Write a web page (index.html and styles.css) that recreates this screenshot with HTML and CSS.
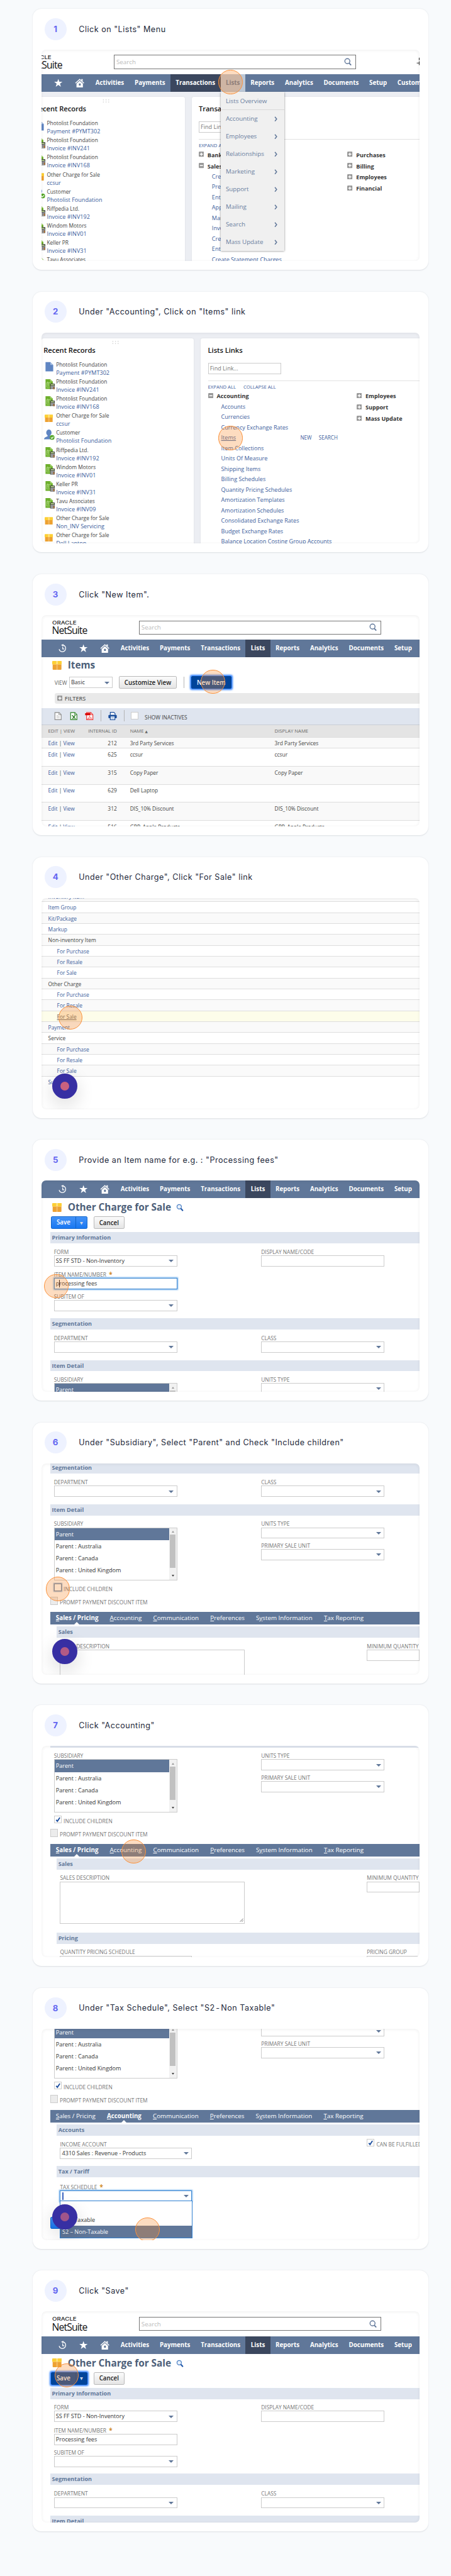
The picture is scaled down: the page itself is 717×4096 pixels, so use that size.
FILE: index.html
```
<!DOCTYPE html>
<html lang="en">
<head>
<meta charset="utf-8">
<title>NetSuite item guide</title>
<link rel="stylesheet" href="styles.css">
</head>
<body>
<svg class="sprite" width="0" height="0">
  <symbol id="i-history" viewBox="0 0 22 22"><path d="M9 2.6A8.4 8.4 0 1 1 2 13" fill="none" stroke="#fff" stroke-width="2"/><path d="M7 2.8l5.500-2.800v5.800z" fill="#fff"/><path d="M11 6.500v6h4" fill="none" stroke="#fff" stroke-width="2"/></symbol>
  <symbol id="i-star" viewBox="0 0 22 22"><path d="M11 .8l2.600 7.200h7.700l-6.100 4.700 2.300 7.700L11 15.800l-6.500 4.600 2.300-7.700L.7 8h7.700z" fill="#fff"/></symbol>
  <symbol id="i-home" viewBox="0 0 24 22"><path d="M1.500 11.500L12 2l10.500 9.500" fill="none" stroke="#fff" stroke-width="2.200"/><path d="M16 1h3.500v5.500L16 3.800z" fill="#fff"/><path d="M4 12.500L12 5.500l8 7V22H4z" fill="#fff"/><path d="M10 12h4.500v5.500H10z" fill="#607799"/></symbol>
  <symbol id="i-search" viewBox="0 0 18 18"><circle cx="7.500" cy="7.500" r="5.700" fill="none" stroke="#607799" stroke-width="2"/><path d="M11.500 11.800l4.500 4.700" stroke="#607799" stroke-width="2.600"/></symbol>
  <symbol id="i-find" viewBox="0 0 18 18"><circle cx="7" cy="6.800" r="5" fill="#eaf2fb" stroke="#4a7fc4" stroke-width="1.800"/><path d="M10.500 10.500l5 5.500" stroke="#1f56a8" stroke-width="3"/></symbol>
  <symbol id="i-box" viewBox="0 0 22 20"><path d="M0 1.500Q0 0 1.500 0h19Q22 0 22 1.500V8H0z" fill="#fdcf35"/><path d="M1 8h20v10.500q0 1.500-1.500 1.500h-17Q1 20 1 18.500z" fill="#eda131"/><path d="M9 0h4v8H9z" fill="#fee080"/><path d="M9 8h4v12H9z" fill="#f2b55c"/></symbol>
  <symbol id="i-page" viewBox="0 0 22 24"><path d="M.5 1h11l6.500 6.500V22H.5z" fill="#5f85c2"/><path d="M11.500 1L18 7.500h-6.500z" fill="#a9c0e2"/></symbol>
  <symbol id="i-invoice" viewBox="0 0 22 24"><path d="M.5 0h10.500l6 5.500V22H.5z" fill="#6cae2a"/><path d="M11 0l6 5.500h-6z" fill="#a5d36f"/><path d="M3 8h9v10H3zM5.500 5v10M8 8v8" fill="none" stroke="#bfe29a" stroke-width="1"/><rect x="11" y="10" width="10.500" height="14" rx="1" fill="#3c3c3c"/><path d="M12.500 11.500h7.500v2.500h-7.500z" fill="#b9d68e"/><path d="M12.500 15.500h2v2h-2zm3 0h2v2h-2zm3 0h2v2h-2zm-6 2.800h2v2h-2zm3 0h2v2h-2zm-3 2.700h2v2h-2zm3 0h2v2h-2z" fill="#eee"/><path d="M18.500 18.300h2v4.700h-2z" fill="#e0924a"/></symbol>
  <symbol id="i-user" viewBox="0 0 24 24"><ellipse cx="11" cy="7" rx="6" ry="7" fill="#5f85c2"/><path d="M8 11h6v4l6 3v4H0q0-4 8-6.500z" fill="#5f85c2"/><circle cx="18.500" cy="18" r="5.500" fill="#58a82c"/><path d="M15.800 18l2 2.200 3.700-4" fill="none" stroke="#fff" stroke-width="1.700"/></symbol>
  <symbol id="i-plus" viewBox="0 0 12 12"><rect width="12" height="12" rx="2" fill="#999"/><path d="M6 2.500v7M2.500 6h7" stroke="#fff" stroke-width="2"/></symbol>
  <symbol id="i-minus" viewBox="0 0 12 12"><rect width="12" height="12" rx="2" fill="#999"/><path d="M2.500 6h7" stroke="#fff" stroke-width="2"/></symbol>
  <symbol id="i-chev" viewBox="0 0 8 12"><path d="M1.500 1l4 5-4 5" fill="none" stroke="#607799" stroke-width="2.200"/></symbol>
  <symbol id="i-tick" viewBox="0 0 16 16"><path d="M3.500 8.500l3 3.500 6-9" fill="none" stroke="#1f50a0" stroke-width="2.800"/></symbol>
  <symbol id="i-doc" viewBox="0 0 18 20"><path d="M1.500 1.500h10l5 5v12h-15z" fill="#fff" stroke="#999" stroke-width="2"/><path d="M11 1.500v5.500h5.500" fill="none" stroke="#999" stroke-width="1.500"/><path d="M5 8.500h5M5 11.500h8M5 14h8" stroke="#bbb" stroke-width="1.200"/></symbol>
  <symbol id="i-xls" viewBox="0 0 18 20"><path d="M1.500 1.500h10l5 5v12h-15z" fill="#fff" stroke="#4a9444" stroke-width="2"/><path d="M11 1.500v5.500h5.500" fill="none" stroke="#4a9444" stroke-width="1.500"/><path d="M5 8l8 8.500M12.500 8L6 16.500" stroke="#2f7d2b" stroke-width="2.200"/></symbol>
  <symbol id="i-pdf" viewBox="0 0 20 20"><path d="M3.500 1.500h10l5 5v12h-15z" fill="#fff" stroke="#ee4a4a" stroke-width="2"/><path d="M13 1.500v5.500h5.500" fill="none" stroke="#ee4a4a" stroke-width="1.500"/><path d="M0 3h12.500v5H0z" fill="#d80000"/><path d="M10.500 9c0 3-2 6-4.500 7.500 3-1.500 6-2 10-1.500-3 0-5-3-5.500-6z" fill="none" stroke="#ee4a4a" stroke-width="1.200"/></symbol>
  <symbol id="i-print" viewBox="0 0 20 20"><path d="M4.500 1h8.500l3 3v4h-11.500z" fill="#fff" stroke="#1c4f9c" stroke-width="1.800"/><rect y="7" width="20" height="8" rx="2" fill="#1c4f9c"/><path d="M4.500 10h11v9h-11z" fill="#fff" stroke="#1c4f9c" stroke-width="1.800"/><path d="M6.500 12.500h7M6.500 14.500h7M6.500 16.500h7" stroke="#7c9fcf"/></symbol>
  <symbol id="i-grip" viewBox="0 0 16 8"><path d="M1 0h2v2H1zM7 0h2v2H7zM13 0h2v2h-2zM1 5h2v2H1zM7 5h2v2H7zM13 5h2v2h-2z" fill="#d4d4d4"/></symbol>
  <symbol id="i-scan" viewBox="0 0 20 24"><path d="M8 8V2h8M1 16h12M8 11v11" fill="none" stroke="#333" stroke-width="2"/></symbol>
</svg>
<main class="guide">

<section class="card">
  <header class="step"><span class="num">1</span><h2>Click on "Lists" Menu</h2></header>
  <div class="shot home">
    <div class="top shift"><div class="logo"><b>ORACLE</b><i>NetSuite</i></div><div class="search"><span>Search</span><svg><use href="#i-search"/></svg></div><svg class="scan"><use href="#i-scan"/></svg></div>
    <nav class="nav shift"><a class="ic"><svg><use href="#i-history"/></svg></a><a class="ic"><svg><use href="#i-star"/></svg></a><a class="ic"><svg><use href="#i-home"/></svg></a><a>Activities</a><a>Payments</a><a class="on">Transactions</a><a class="hover">Lists</a><a>Reports</a><a>Analytics</a><a>Documents</a><a>Setup</a><a>Customization</a></nav>
    <div class="panels first">
      <div class="panel left">
        <svg class="grip"><use href="#i-grip"/></svg>
        <h3>Recent Records</h3>
        <ul class="records">
          <li><svg><use href="#i-page"/></svg><div>Photolist Foundation<a>Payment #PYMT302</a></div></li>
          <li><svg><use href="#i-invoice"/></svg><div>Photolist Foundation<a>Invoice #INV241</a></div></li>
          <li><svg><use href="#i-invoice"/></svg><div>Photolist Foundation<a>Invoice #INV168</a></div></li>
          <li><svg class="bx"><use href="#i-box"/></svg><div>Other Charge for Sale<a>ccsur</a></div></li>
          <li><svg class="us"><use href="#i-user"/></svg><div>Customer<a>Photolist Foundation</a></div></li>
          <li><svg><use href="#i-invoice"/></svg><div>Riffpedia Ltd.<a>Invoice #INV192</a></div></li>
          <li><svg><use href="#i-invoice"/></svg><div>Windom Motors<a>Invoice #INV01</a></div></li>
          <li><svg><use href="#i-invoice"/></svg><div>Keller PR<a>Invoice #INV31</a></div></li>
          <li><svg><use href="#i-invoice"/></svg><div>Tavu Associates<a>Invoice #INV09</a></div></li>
        </ul>
      </div>
      <div class="panel right">
        <h3>Transaction Links</h3>
        <div class="find">Find Link...</div>
        <div class="expand"><a>EXPAND ALL</a></div>
        <div class="tree">
          <div>
            <p class="node"><svg><use href="#i-plus"/></svg>Bank</p>
            <p class="node"><svg><use href="#i-minus"/></svg>Sales</p>
            <ul class="links"><li>Create</li><li>Prepare</li><li>Enter</li><li>Approve</li><li>Manage</li><li>Invoice</li><li>Create</li><li>Enter Cash Sales</li><li>Create Statement Charges</li></ul>
          </div>
          <div>
            <p class="node"><svg><use href="#i-plus"/></svg>Purchases</p>
            <p class="node"><svg><use href="#i-plus"/></svg>Billing</p>
            <p class="node"><svg><use href="#i-plus"/></svg>Employees</p>
            <p class="node"><svg><use href="#i-plus"/></svg>Financial</p>
          </div>
        </div>
      </div>
    </div>
    <ul class="menu"><li>Lists Overview</li><li>Accounting<svg><use href="#i-chev"/></svg></li><li>Employees<svg><use href="#i-chev"/></svg></li><li>Relationships<svg><use href="#i-chev"/></svg></li><li>Marketing<svg><use href="#i-chev"/></svg></li><li>Support<svg><use href="#i-chev"/></svg></li><li>Mailing<svg><use href="#i-chev"/></svg></li><li>Search<svg><use href="#i-chev"/></svg></li><li>Mass Update<svg><use href="#i-chev"/></svg></li></ul>
    <span class="ring r1"></span>
  </div>
</section>

<section class="card">
  <header class="step"><span class="num">2</span><h2>Under "Accounting", Click on "Items" link</h2></header>
  <div class="shot home">
    <div class="panels second">
      <div class="panel left">
        <svg class="grip"><use href="#i-grip"/></svg>
        <h3>Recent Records</h3>
        <ul class="records">
          <li><svg><use href="#i-page"/></svg><div>Photolist Foundation<a>Payment #PYMT302</a></div></li>
          <li><svg><use href="#i-invoice"/></svg><div>Photolist Foundation<a>Invoice #INV241</a></div></li>
          <li><svg><use href="#i-invoice"/></svg><div>Photolist Foundation<a>Invoice #INV168</a></div></li>
          <li><svg class="bx"><use href="#i-box"/></svg><div>Other Charge for Sale<a>ccsur</a></div></li>
          <li><svg class="us"><use href="#i-user"/></svg><div>Customer<a>Photolist Foundation</a></div></li>
          <li><svg><use href="#i-invoice"/></svg><div>Riffpedia Ltd.<a>Invoice #INV192</a></div></li>
          <li><svg><use href="#i-invoice"/></svg><div>Windom Motors<a>Invoice #INV01</a></div></li>
          <li><svg><use href="#i-invoice"/></svg><div>Keller PR<a>Invoice #INV31</a></div></li>
          <li><svg><use href="#i-invoice"/></svg><div>Tavu Associates<a>Invoice #INV09</a></div></li>
          <li><svg class="bx"><use href="#i-box"/></svg><div>Other Charge for Sale<a>Non_INV Servicing</a></div></li>
          <li><svg class="bx"><use href="#i-box"/></svg><div>Other Charge for Sale<a>Dell Laptop</a></div></li>
        </ul>
      </div>
      <div class="panel right">
        <h3>Lists Links</h3>
        <div class="find">Find Link...</div>
        <div class="expand"><a>EXPAND ALL</a><a>COLLAPSE ALL</a></div>
        <div class="tree">
          <div>
            <p class="node"><svg><use href="#i-minus"/></svg>Accounting</p>
            <ul class="links"><li>Accounts</li><li>Currencies</li><li>Currency Exchange Rates</li><li class="split"><u>Items</u><small>NEW</small><small>SEARCH</small></li><li>Item Collections</li><li>Units Of Measure</li><li>Shipping Items</li><li>Billing Schedules</li><li>Quantity Pricing Schedules</li><li>Amortization Templates</li><li>Amortization Schedules</li><li>Consolidated Exchange Rates</li><li>Budget Exchange Rates</li><li>Balance Location Costing Group Accounts</li></ul>
          </div>
          <div>
            <p class="node"><svg><use href="#i-plus"/></svg>Employees</p>
            <p class="node"><svg><use href="#i-plus"/></svg>Support</p>
            <p class="node"><svg><use href="#i-plus"/></svg>Mass Update</p>
          </div>
        </div>
      </div>
    </div>
    <span class="ring r2"></span>
  </div>
</section>

<section class="card">
  <header class="step"><span class="num">3</span><h2>Click "New Item".</h2></header>
  <div class="shot">
    <div class="top"><div class="logo"><b>ORACLE</b><i>NetSuite</i></div><div class="search"><span>Search</span><svg><use href="#i-search"/></svg></div></div>
    <nav class="nav"><a class="ic"><svg><use href="#i-history"/></svg></a><a class="ic"><svg><use href="#i-star"/></svg></a><a class="ic"><svg><use href="#i-home"/></svg></a><a>Activities</a><a>Payments</a><a>Transactions</a><a class="on">Lists</a><a>Reports</a><a>Analytics</a><a>Documents</a><a>Setup</a></nav>
    <div class="title tight"><svg class="box"><use href="#i-box"/></svg><h1>Items</h1></div>
    <div class="viewbar"><label>VIEW</label><span class="input sel">Basic</span><span class="btn cust">Customize View</span><i class="sep"></i><span class="btn new">New Item</span></div>
    <div class="filters"><svg><use href="#i-plus"/></svg>FILTERS</div>
    <div class="tools"><svg><use href="#i-doc"/></svg><svg><use href="#i-xls"/></svg><svg><use href="#i-pdf"/></svg><i class="sep"></i><svg><use href="#i-print"/></svg><i class="sep"></i><span class="cb"></span><span class="inact">SHOW INACTIVES</span></div>
    <div class="table">
      <div class="tr th"><span>EDIT | VIEW</span><span>INTERNAL ID</span><span>NAME <em>▲</em></span><span>DISPLAY NAME</span></div>
      <div class="tr short"><span><a>Edit</a> | <a>View</a></span><span>212</span><span>3rd Party Services</span><span>3rd Party Services</span></div>
      <div class="tr"><span><a>Edit</a> | <a>View</a></span><span>625</span><span>ccsur</span><span>ccsur</span></div>
      <div class="tr"><span><a>Edit</a> | <a>View</a></span><span>315</span><span>Copy Paper</span><span>Copy Paper</span></div>
      <div class="tr"><span><a>Edit</a> | <a>View</a></span><span>629</span><span>Dell Laptop</span><span></span></div>
      <div class="tr"><span><a>Edit</a> | <a>View</a></span><span>312</span><span>DIS_10% Discount</span><span>DIS_10% Discount</span></div>
      <div class="tr"><span><a>Edit</a> | <a>View</a></span><span>516</span><span>GRP_Apple Products</span><span>GRP_Apple Products</span></div>
    </div>
    <span class="ring r3"></span>
  </div>
</section>

<section class="card">
  <header class="step"><span class="num">4</span><h2>Under "Other Charge", Click "For Sale" link</h2></header>
  <div class="shot">
    <ul class="types">
      <li>Inventory Item</li><li>Item Group</li><li>Kit/Package</li><li>Markup</li><li class="grp">Non-inventory Item</li><li class="sub">For Purchase</li><li class="sub">For Resale</li><li class="sub">For Sale</li><li class="grp">Other Charge</li><li class="sub">For Purchase</li><li class="sub">For Resale</li><li class="sub hot"><u>For Sale</u></li><li>Payment</li><li class="grp">Service</li><li class="sub">For Purchase</li><li class="sub">For Resale</li><li class="sub">For Sale</li><li>Subtotal</li>
    </ul>
    <span class="ring r4"></span><span class="rec"></span>
  </div>
</section>

<section class="card">
  <header class="step"><span class="num">5</span><h2>Provide an Item name for e.g. : "Processing fees"</h2></header>
  <div class="shot s5">
    <nav class="nav"><a class="ic"><svg><use href="#i-history"/></svg></a><a class="ic"><svg><use href="#i-star"/></svg></a><a class="ic"><svg><use href="#i-home"/></svg></a><a>Activities</a><a>Payments</a><a>Transactions</a><a class="on">Lists</a><a>Reports</a><a>Analytics</a><a>Documents</a><a>Setup</a></nav>
    <div class="title"><svg class="box"><use href="#i-box"/></svg><h1>Other Charge for Sale</h1><svg class="mag"><use href="#i-find"/></svg></div>
    <div class="buttons"><span class="btn save"><b>Save</b><em>▼</em></span><span class="btn">Cancel</span></div>
    <div class="bar prim">Primary Information</div>
    <div class="cols prim">
      <div><div class="field"><label>FORM</label><span class="input sel">SS FF STD - Non-Inventory</span></div>
      <div class="field name"><label>ITEM NAME/NUMBER <em>*</em></label><span class="input focus">p<i class="caret"></i>rocessing fees</span></div>
      <div class="field subof"><label>SUBITEM OF</label><span class="input sel"></span></div></div>
      <div><div class="field"><label>DISPLAY NAME/CODE</label><span class="input"></span></div></div>
    </div>
    <div class="bar seg">Segmentation</div>
    <div class="cols seg"><div class="field"><label>DEPARTMENT</label><span class="input sel"></span></div><div class="field"><label>CLASS</label><span class="input sel"></span></div></div>
    <div class="bar det">Item Detail</div>
    <div class="cols det">
      <div class="field"><label>SUBSIDIARY</label><div class="list"><ul><li>Parent</li><li>Parent : Australia</li><li>Parent : Canada</li><li>Parent : United Kingdom</li></ul><div class="scroll"><i></i></div></div></div>
      <div class="field"><label>UNITS TYPE</label><span class="input sel"></span></div>
    </div>
    <span class="ring r5"></span>
  </div>
</section>

<section class="card">
  <header class="step"><span class="num">6</span><h2>Under "Subsidiary", Select "Parent" and Check "Include children"</h2></header>
  <div class="shot s6">
    <div class="bar">Segmentation</div>
    <div class="cols seg"><div class="field"><label>DEPARTMENT</label><span class="input sel"></span></div><div class="field"><label>CLASS</label><span class="input sel"></span></div></div>
    <div class="bar det">Item Detail</div>
    <div class="cols det">
      <div class="field"><label>SUBSIDIARY</label><div class="list"><ul><li>Parent</li><li>Parent : Australia</li><li>Parent : Canada</li><li>Parent : United Kingdom</li></ul><div class="scroll"><i></i></div></div></div>
      <div><div class="field"><label>UNITS TYPE</label><span class="input sel"></span></div><div class="field psu"><label>PRIMARY SALE UNIT</label><span class="input sel"></span></div></div>
    </div>
    <div class="check inc"><span class="cb focus"></span>INCLUDE CHILDREN</div>
    <div class="check pay"><span class="cb off"></span>PROMPT PAYMENT DISCOUNT ITEM</div>
    <div class="tabs"><a class="on"><u>S</u>ales / Pricing</a><a><u>A</u>ccounting</a><a><u>C</u>ommunication</a><a><u>P</u>references</a><a>S<u>y</u>stem Information</a><a><u>T</u>ax Reporting</a></div>
    <div class="bar inner">Sales</div>
    <div class="wide"><div class="field"><label>SALES DESCRIPTION</label><span class="area"></span></div><div class="field"><label>MINIMUM QUANTITY</label><span class="input"></span></div></div>
    <span class="ring r6"></span><span class="rec b"></span>
  </div>
</section>

<section class="card">
  <header class="step"><span class="num">7</span><h2>Click "Accounting"</h2></header>
  <div class="shot s7">
    <div class="bar">Item Detail</div>
    <div class="cols det">
      <div class="field"><label>SUBSIDIARY</label><div class="list"><ul><li>Parent</li><li>Parent : Australia</li><li>Parent : Canada</li><li>Parent : United Kingdom</li></ul><div class="scroll"><i></i></div></div></div>
      <div><div class="field"><label>UNITS TYPE</label><span class="input sel"></span></div><div class="field psu"><label>PRIMARY SALE UNIT</label><span class="input sel"></span></div></div>
    </div>
    <div class="check inc"><span class="cb"><svg><use href="#i-tick"/></svg></span>INCLUDE CHILDREN</div>
    <div class="check pay"><span class="cb off"></span>PROMPT PAYMENT DISCOUNT ITEM</div>
    <div class="tabs"><a class="on"><u>S</u>ales / Pricing</a><a><u>A</u>ccounting</a><a><u>C</u>ommunication</a><a><u>P</u>references</a><a>S<u>y</u>stem Information</a><a><u>T</u>ax Reporting</a></div>
    <div class="bar inner">Sales</div>
    <div class="wide"><div class="field"><label>SALES DESCRIPTION</label><span class="area"><svg viewBox="0 0 10 10"><path d="M1 9l8-8M5.500 9L9 5.500" stroke="#444" stroke-width="1.200"/></svg></span></div><div class="field"><label>MINIMUM QUANTITY</label><span class="input"></span></div></div>
    <div class="bar inner pricing">Pricing</div>
    <div class="wide"><div class="field"><label>QUANTITY PRICING SCHEDULE</label><span class="input w300"></span></div><div class="field"><label>PRICING GROUP</label><span class="input"></span></div></div>
    <span class="ring r7"></span>
  </div>
</section>

<section class="card">
  <header class="step"><span class="num">8</span><h2>Under "Tax Schedule", Select "S2<span class="dash"> - </span>Non Taxable"</h2></header>
  <div class="shot s8">
    <div class="cols">
      <div class="field"><label>SUBSIDIARY</label><div class="list"><ul><li>Parent</li><li>Parent : Australia</li><li>Parent : Canada</li><li>Parent : United Kingdom</li></ul><div class="scroll"><i></i></div></div></div>
      <div><div class="field"><label>UNITS TYPE</label><span class="input sel"></span></div><div class="field psu"><label>PRIMARY SALE UNIT</label><span class="input sel"></span></div></div>
    </div>
    <div class="check inc"><span class="cb"><svg><use href="#i-tick"/></svg></span>INCLUDE CHILDREN</div>
    <div class="check pay"><span class="cb off"></span>PROMPT PAYMENT DISCOUNT ITEM</div>
    <div class="tabs"><a><u>S</u>ales / Pricing</a><a class="on"><u>A</u>ccounting</a><a><u>C</u>ommunication</a><a><u>P</u>references</a><a>S<u>y</u>stem Information</a><a><u>T</u>ax Reporting</a></div>
    <div class="bar inner">Accounts</div>
    <div class="wide"><div class="field"><label>INCOME ACCOUNT</label><span class="input sel w300">4310 Sales : Revenue - Products</span></div><div class="check ful"><span class="cb"><svg><use href="#i-tick"/></svg></span>CAN BE FULFILLED</div></div>
    <div class="bar inner tax">Tax / Tariff</div>
    <div class="wide taxf"><div class="field"><label>TAX SCHEDULE <em>*</em></label><span class="input sel w300 focus"><i class="cursor"></i></span></div></div>
    <span class="btn save under"></span>
    <ul class="drop"><li></li><li>S1 – Taxable</li><li class="on">S2 – Non-Taxable</li></ul>
    <span class="rec c"></span><span class="ring r8"></span>
  </div>
</section>

<section class="card">
  <header class="step"><span class="num">9</span><h2>Click "Save"</h2></header>
  <div class="shot">
    <div class="top"><div class="logo"><b>ORACLE</b><i>NetSuite</i></div><div class="search"><span>Search</span><svg><use href="#i-search"/></svg></div></div>
    <nav class="nav"><a class="ic"><svg><use href="#i-history"/></svg></a><a class="ic"><svg><use href="#i-star"/></svg></a><a class="ic"><svg><use href="#i-home"/></svg></a><a>Activities</a><a>Payments</a><a>Transactions</a><a class="on">Lists</a><a>Reports</a><a>Analytics</a><a>Documents</a><a>Setup</a></nav>
    <div class="title"><svg class="box"><use href="#i-box"/></svg><h1>Other Charge for Sale</h1><svg class="mag"><use href="#i-find"/></svg></div>
    <div class="buttons"><span class="btn save active"><b>Save</b><em>▼</em></span><span class="btn">Cancel</span></div>
    <div class="bar prim">Primary Information</div>
    <div class="cols prim">
      <div><div class="field"><label>FORM</label><span class="input sel">SS FF STD - Non-Inventory</span></div>
      <div class="field name"><label>ITEM NAME/NUMBER <em>*</em></label><span class="input">Processing fees</span></div>
      <div class="field subof"><label>SUBITEM OF</label><span class="input sel"></span></div></div>
      <div><div class="field"><label>DISPLAY NAME/CODE</label><span class="input"></span></div></div>
    </div>
    <div class="bar seg">Segmentation</div>
    <div class="cols seg"><div class="field"><label>DEPARTMENT</label><span class="input sel"></span></div><div class="field"><label>CLASS</label><span class="input sel"></span></div></div>
    <div class="bar det">Item Detail</div>
    <span class="ring r9"></span>
  </div>
</section>

</main>
</body>
</html>
```
FILE: styles.css
```
* { box-sizing: border-box; }
html { background: #f8fafc; }
body { margin: 0; background: #f8fafc; overflow: hidden; }
.sprite { position: absolute; }
ul { list-style: none; margin: 0; padding: 0; }
h1, h2, h3, p { margin: 0; }
svg { display: block; flex: none; }

.guide {
  zoom: .6997;
  padding: 20px 0 0 74px;
  display: flex;
  flex-direction: column;
  gap: 49.5px;
  height: 5853px;
  overflow: hidden;
}
.card {
  flex: none;
  width: 900px;
  height: 593px;
  padding: 21px 20px 20px;
  background: #fff;
  border-radius: 20px;
  box-shadow: 0 1px 3px rgba(15, 23, 42, .12);
}
.step { display: flex; align-items: center; height: 50px; padding-left: 7px; margin-bottom: 22px; font-family: Inter, sans-serif; }
.num { width: 50px; height: 50px; border-radius: 50%; background: #eef2ff; color: #6366f1; font-size: 19px; font-weight: 700; line-height: 50px; text-align: center; }
.step h2 { margin-left: 28px; font-size: 18px; font-weight: 400; color: #1e293b; letter-spacing: .73px; white-space: nowrap; }
.dash { word-spacing: -3.500px; }

.shot {
  position: relative;
  width: 860px;
  height: 480px;
  overflow: hidden;
  border-radius: 10px;
  background: #fff;
  font-family: "Open Sans", sans-serif;
  font-size: 12px;
  color: #444;
  display: flow-root;
  white-space: nowrap;
}
.shot::after { content: ""; position: absolute; inset: 0; border-radius: 10px; box-shadow: inset 0 1px 7px rgba(0, 0, 0, .07); pointer-events: none; }
.home { background: #eceef3; }

/* product header */
.top { display: flex; align-items: flex-start; height: 56px; padding: 12px 0 0 24px; background: #fff; }
.logo { width: 198px; color: #222; line-height: 1; padding-top: 2px; }
.logo b { display: block; width: 40px; font: 500 10px/9px Inter, sans-serif; transform: scaleX(1.39); transform-origin: 0 0; }
.logo i { display: block; font: 400 22.5px/24px "Open Sans", sans-serif; letter-spacing: -1.25px; color: #111; }
.search { display: flex; align-items: center; justify-content: space-between; width: 550px; height: 32px; padding: 0 8px 0 4px; border: 1px solid #777; color: #bbb; font-size: 14px; }
.search svg { width: 18px; height: 18px; }
.scan { width: 16px; height: 20px; margin: 5px 0 0 137px; }
.top.shift { width: 940px; margin-left: -57px; }
.nav { display: flex; height: 40px; padding-left: 24px; background: #607799; color: #fff; font-size: 14px; font-weight: 700; line-height: 41px; }
.nav.shift { width: 960px; margin-left: -57px; }
.nav a { padding: 0 12px; }
.nav .ic { width: 48px; padding: 10px 13px; }
.nav .ic svg { width: 22px; height: 20px; }
.nav .on { background: #3b475e; }
.nav .hover { background: #bcc8d7; color: #607799; }

/* dashboard panels */
.panels { display: flex; gap: 16px; width: 1000px; }
.panels.first { margin: 11px 0 0 -21px; }
.panels.second { margin-top: 13px; }
.panel { position: relative; height: 520px; background: #fff; border-radius: 5px; box-shadow: 0 0 4px rgba(0, 0, 0, .08); }
.panel h3 { color: #111; font-size: 16px; font-weight: 600; letter-spacing: -.08px; line-height: 22px; }
.panel.left { width: 346.500px; padding: 16px 0 0 5px; }
.panel.right { flex: 1; padding: 16px 0 0 16px; }
.grip { position: absolute; left: 160px; top: 6px; width: 16px; height: 8px; }
.records { padding-top: 14px; }
.records li { display: flex; height: 38.750px; font-size: 12px; line-height: 18.500px; }
.records svg { width: 22px; height: 24px; margin: 2px 3px 0 3.500px; }
.records .bx { width: 19px; height: 18px; margin: 5px 6.500px 0 3px; }
.records .us { width: 24px; margin: 1px 3.500px 0 1px; }
.records a { display: block; font-size: 13px; color: #3c609d; }
.find { width: 167px; height: 25px; margin: 18.500px 0 15px; padding-left: 3px; border: 1px solid #ccc; color: #777; font-size: 13px; line-height: 23px; }
.expand { display: flex; gap: 17px; padding-top: 5px; border-top: 2px solid #e2e2e2; font-size: 11px; line-height: 16px; color: #3c609d; }
.tree { display: grid; grid-template-columns: 338px 1fr; }
.node { display: flex; align-items: center; gap: 8px; height: 25.700px; font-size: 13px; font-weight: 700; color: #333; }
.node svg { width: 12px; height: 12px; margin-top: -2px; }
.links { padding-left: 30px; font-size: 13px; color: #3c609d; }
.links li { height: 23.600px; line-height: 23.600px; }
.links .split { display: flex; }
.links u { width: 180px; }
.links small { font-size: 11.600px; margin-right: 16px; }
.menu { position: absolute; left: 407px; top: 96px; width: 144.500px; background: #f0f0f0; box-shadow: 0 1px 4px rgba(0, 0, 0, .5); color: #6b80a0; font-size: 14px; }
.menu li { display: flex; align-items: center; justify-content: space-between; height: 40px; padding: 0 15px 0 12px; }
.menu li:first-child { height: 41px; border-bottom: 1px solid #d8d8d8; }
.menu svg { width: 8px; height: 12px; }

/* controls */
.input { position: relative; display: block; height: 25.500px; padding-left: 3px; border: 1px solid #ccc; background: #fff; color: #333; font-size: 13px; line-height: 24px; }
.sel::after { content: ""; position: absolute; right: 6px; top: 9px; border: 6px solid transparent; border-top: 7px solid #607799; border-bottom: 0; }
.focus { border-color: #3f87cf; box-shadow: 0 0 3px 1px #6fb0ee; }
.caret { display: inline-block; width: 1px; height: 17px; background: #111; vertical-align: middle; margin: -2px -1px 0 0; }
.cursor { display: block; width: 3px; height: 17px; margin-top: 3px; background: #3b63c0; }
.btn { display: flex; align-items: center; justify-content: center; height: 28px; border: 1px solid #b9b9b9; border-radius: 3px; background: linear-gradient(#fbfbfb, #e5e5e5); color: #222; font-size: 14px; font-weight: 600; }
.save { width: 83px; justify-content: flex-start; border-color: #1166cc; background: linear-gradient(#4392f7, #1878f2); color: #fff; }
.save b { width: 56px; height: 26px; line-height: 26px; text-align: center; font-weight: 600; border-right: 1px solid #0f63c8; }
.save em { flex: 1; text-align: center; font: 9px "DejaVu Sans", sans-serif; color: #cfd8e6; }
.save.active, .new { background: #00449a; border-color: #00449a; box-shadow: 0 0 4px 2px #2f80ff; color: #fff; }
.save.active b { border-color: #003a86; }
.cb { display: block; width: 17px; height: 17.500px; border: 1px solid #ccc; background: #fff; }
.cb svg { width: 15px; height: 15px; }
.cb.off { background: #ececec; }
.cb.focus { border: 2px solid #6d84a3; box-shadow: 0 0 2px 1px #7aa3cf; }

/* item list page */
.title { display: flex; align-items: center; height: 42px; padding-left: 24px; }
.title.tight { height: 35px; }
.title .box { width: 22px; height: 20px; margin-right: 14px; }
.title h1 { font-size: 22px; font-weight: 700; color: #4d5f79; letter-spacing: -.05px; }
.title .mag { width: 18px; height: 18px; margin: 2px 0 0 12px; }
.viewbar { display: flex; align-items: center; height: 28px; margin-top: 8px; padding-left: 30px; }
.viewbar label { width: 33px; color: #666; }
.viewbar .input { width: 98.500px; margin-right: 15px; }
.cust { width: 131px; }
.sep { width: 1px; height: 26px; background: #b5b5b5; }
.viewbar .sep { margin: 0 16px; }
.new { width: 91px; }
.filters { display: flex; align-items: center; gap: 5px; height: 23.500px; margin: 10.500px 0 0 30px; padding-left: 6px; border-radius: 5px 0 0 5px; background: #e9e9e9; color: #666; font-size: 13px; font-weight: 600; }
.filters svg { width: 12px; height: 12px; }
.tools { display: flex; align-items: center; height: 39.500px; margin-top: 10px; padding: 0 0 2px 29px; background: #dfe5ef; border-bottom: 1px solid #c9ced6; }
.tools svg { width: 18px; height: 19px; margin-right: 17px; }
.tools svg:nth-of-type(3) { width: 20px; margin-right: 16px; }
.tools svg:nth-of-type(4) { width: 20px; margin: 0 15px 0 16px; }
.tools .cb { margin: -1px 14px 0 16px; }
.inact { padding-top: 6px; }
.tr { display: grid; grid-template-columns: 85px 71px 358.500px 1fr; padding-left: 15.500px; height: 41px; padding-top: 5px; line-height: 17px; border-bottom: 1px solid #ddd; }
.tr:nth-child(even) { background: #f9f9f9; }
.tr span:nth-child(2) { text-align: right; }
.tr span:nth-child(3) { padding-left: 30px; }
.tr a { color: #3c609d; }
.tr.short { height: 25px; }
.tr.th { height: 28px; background: #e4e4e4; font-size: 11px; color: #666; }
.th em { font: 8px "DejaVu Sans", sans-serif; }

/* item types */
.types { margin-top: -15.400px; }
.types li { height: 24.800px; padding-left: 15.500px; line-height: 25px; border-bottom: 1px solid #dedede; color: #3c609d; }
.types li:nth-child(odd) { background: #fafafa; }
.types .grp { color: #444; }
.types .sub { padding-left: 35.500px; }
.types li.hot { background: #fdfdea; color: #666; }
.types li:last-child { border: 0; height: 40px; }

/* item form */
.s5 .nav { margin-top: -.5px; }
.buttons { display: flex; gap: 14px; padding-left: 21.500px; }
.buttons .btn:last-child { width: 70.500px; }
.bar { height: 25.500px; margin-left: 20px; padding-left: 4px; background: #dfe5ef; color: #607799; font-size: 13px; font-weight: 700; line-height: 25.500px; }
.bar.prim { margin-top: 8px; }
.bar.seg { margin-top: 15.500px; }
.bar.det { margin-top: 17px; }
.bar.inner { margin: 5px 0 0 34.500px; }
.cols { display: grid; grid-template-columns: 471px 1fr; padding-left: 28.500px; }
.cols.prim { margin-top: 10.500px; }
.cols.seg { margin-top: 11.500px; }
.cols.det { margin-top: 10.700px; }
.cols .field { width: 280px; }
.field label { display: block; height: 16px; line-height: 16px; color: #777; }
.field em { font-style: normal; font-weight: 700; font-size: 14px; color: #d08a28; margin-left: 3px; }
.name { margin-top: 11px; }
.subof { margin-top: 8px; }
.psu { margin-top: 7.500px; }
.list { display: flex; height: 121px; border: 1px solid #ccc; }
.list ul { flex: 1; }
.list li { height: 27.500px; padding-left: 3px; line-height: 28px; font-size: 13px; color: #333; }
.list li:first-child { background: #607799; color: #fff; }
.scroll { display: flex; flex-direction: column; align-items: center; justify-content: space-between; width: 17px; padding: 7px 0; background: #f1f1f1; }
.scroll::before { content: ""; border: 4px solid transparent; border-bottom: 5px solid #999; border-top: 0; }
.scroll::after { content: ""; border: 4px solid transparent; border-top: 5px solid #444; border-bottom: 0; }
.scroll i { width: 13px; height: 76px; margin-bottom: 12px; background: #c1c1c1; }
.check { display: flex; align-items: flex-start; gap: 5px; color: #777; line-height: 26px; height: 19px; }
.check.inc { margin: 6.500px 0 0 28.500px; }
.check.pay { margin: 12px 0 0 20px; }
.check.ful { margin-top: -4px; }
.tabs { display: flex; gap: 26px; height: 28.500px; margin: 14.500px 0 0 20px; padding-left: 13px; background: #607799; color: #fff; font-size: 14px; line-height: 30px; }
.tabs .on { position: relative; font-weight: 700; }
.tabs .on::after { content: ""; position: absolute; left: 50%; bottom: 0; margin-left: -7px; border: 7px solid transparent; border-bottom: 6px solid #fff; border-top: 0; }
.wide { display: grid; grid-template-columns: 697px 1fr; margin-top: 10.700px; padding-left: 42.500px; }
.area { display: flex; align-items: flex-end; justify-content: flex-end; width: 420px; height: 96px; padding: 2px; border: 1px solid #ccc; background: #fff; }
.area svg { width: 9px; height: 9px; }
.w300 { width: 300px; }
.bar.pricing { margin-top: 20.500px; }
.bar.tax { margin-top: 16px; }
.taxf { margin-top: 14.500px; }
.s6 .bar:first-child { margin-top: -2.200px; }
.s7 .bar:first-child { margin-top: -22px; }
.s8 .cols { margin-top: -23.600px; }
.drop { position: absolute; left: 42px; top: 390.500px; width: 301.500px; height: 85.500px; border: 1px solid #2f7fd0; background: #fff; font-size: 13px; color: #333; }
.drop li { height: 27.800px; line-height: 28px; padding-left: 4px; }
.drop .on { background: #607799; color: #fff; }
.under { position: absolute; left: 20px; top: 427px; }

/* click markers */
.ring { position: absolute; z-index: 2; width: 55px; height: 55px; margin: -27.500px 0 0 -27.500px; border: 2px solid #fb923c; border-radius: 50%; background: rgba(249, 138, 48, .3); }
.rec { position: absolute; left: 24.200px; top: 398.500px; width: 57.500px; height: 57.500px; border: 19px solid #372fa3; border-radius: 50%; background: #c9617e; box-shadow: 0 14px 36px 6px rgba(0, 0, 0, .1); }
.rec.b { background-color: #b35a85; }
.rec.c { background-color: #a0558a; }
.r1 { left: 429.700px; top: 73.500px; }
.r2 { left: 429.700px; top: 240.200px; }
.r3 { left: 389.700px; top: 151.400px; }
.r4 { left: 65.800px; top: 272.200px; }
.r5 { left: 33.800px; top: 239.600px; }
.r6 { left: 37.700px; top: 285.300px; }
.r7 { left: 209.700px; top: 239.500px; }
.r8 { left: 241.400px; top: 456.300px; }
.r9 { left: 57.500px; top: 145.200px; }
```
